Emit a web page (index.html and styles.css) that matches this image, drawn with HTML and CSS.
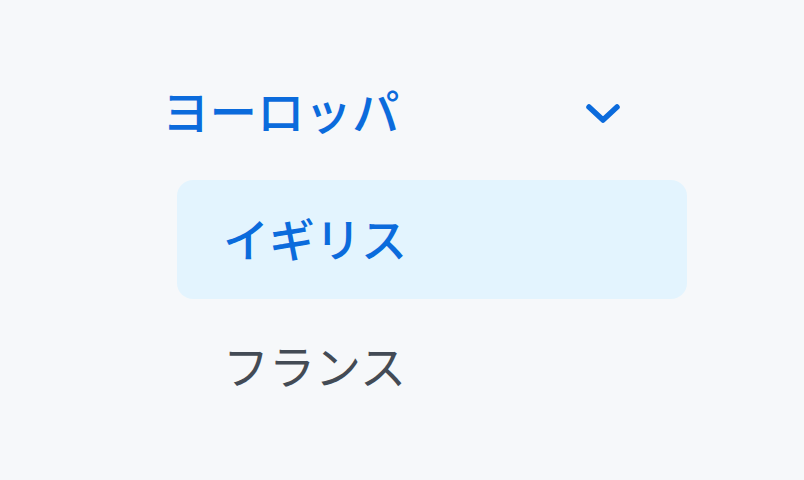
FILE: index.html
```html
<!DOCTYPE html>
<html lang="ja">
<head>
    <meta charset="UTF-8">
    <meta name="viewport" content="width=device-width, initial-scale=1.0">
    <title>地域メニュー</title>
    <link rel="stylesheet" href="styles.css">
</head>
<body>
    <nav class="menu">
        <div class="menu-header">
            <span class="menu-title">ヨーロッパ</span>
            <svg class="chevron" width="40" height="26" viewBox="0 0 40 26">
                <path d="M6 6 L20 19 L34 6" fill="none" stroke="currentColor" stroke-width="5.5" stroke-linecap="round" stroke-linejoin="round"/>
            </svg>
        </div>
        <ul class="menu-list">
            <li class="menu-item active">イギリス</li>
            <li class="menu-item">フランス</li>
        </ul>
    </nav>
</body>
</html>
```

FILE: styles.css
```css
body {
    margin: 0;
    background-color: #f6f8fa;
    font-family: "Noto Sans CJK JP", "Noto Sans", sans-serif;
}
.menu {
    display: flex;
    flex-direction: column;
    padding: 84px 0 0 162px;
}
.menu-header {
    display: flex;
    justify-content: space-between;
    align-items: center;
    width: 461px;
    height: 60px;
    color: #0b6bdc;
}
.menu-title {
    font-size: 47.5px;
    font-weight: 500;
    line-height: 1;
    padding-bottom: 8px;
}
.chevron {
    display: block;
}
.menu-list {
    list-style: none;
    margin: 36px 0 0 15px;
    padding: 0;
    width: 510px;
    display: flex;
    flex-direction: column;
    gap: 8px;
}
.menu-item {
    display: flex;
    align-items: center;
    height: 119px;
    padding: 0 0 6px 46px;
    box-sizing: border-box;
    border-radius: 16px;
    font-size: 46px;
    line-height: 1;
    color: #434b55;
}
.menu-item.active {
    background-color: #e3f4fe;
    color: #0b6bdc;
    font-weight: 500;
}
```
